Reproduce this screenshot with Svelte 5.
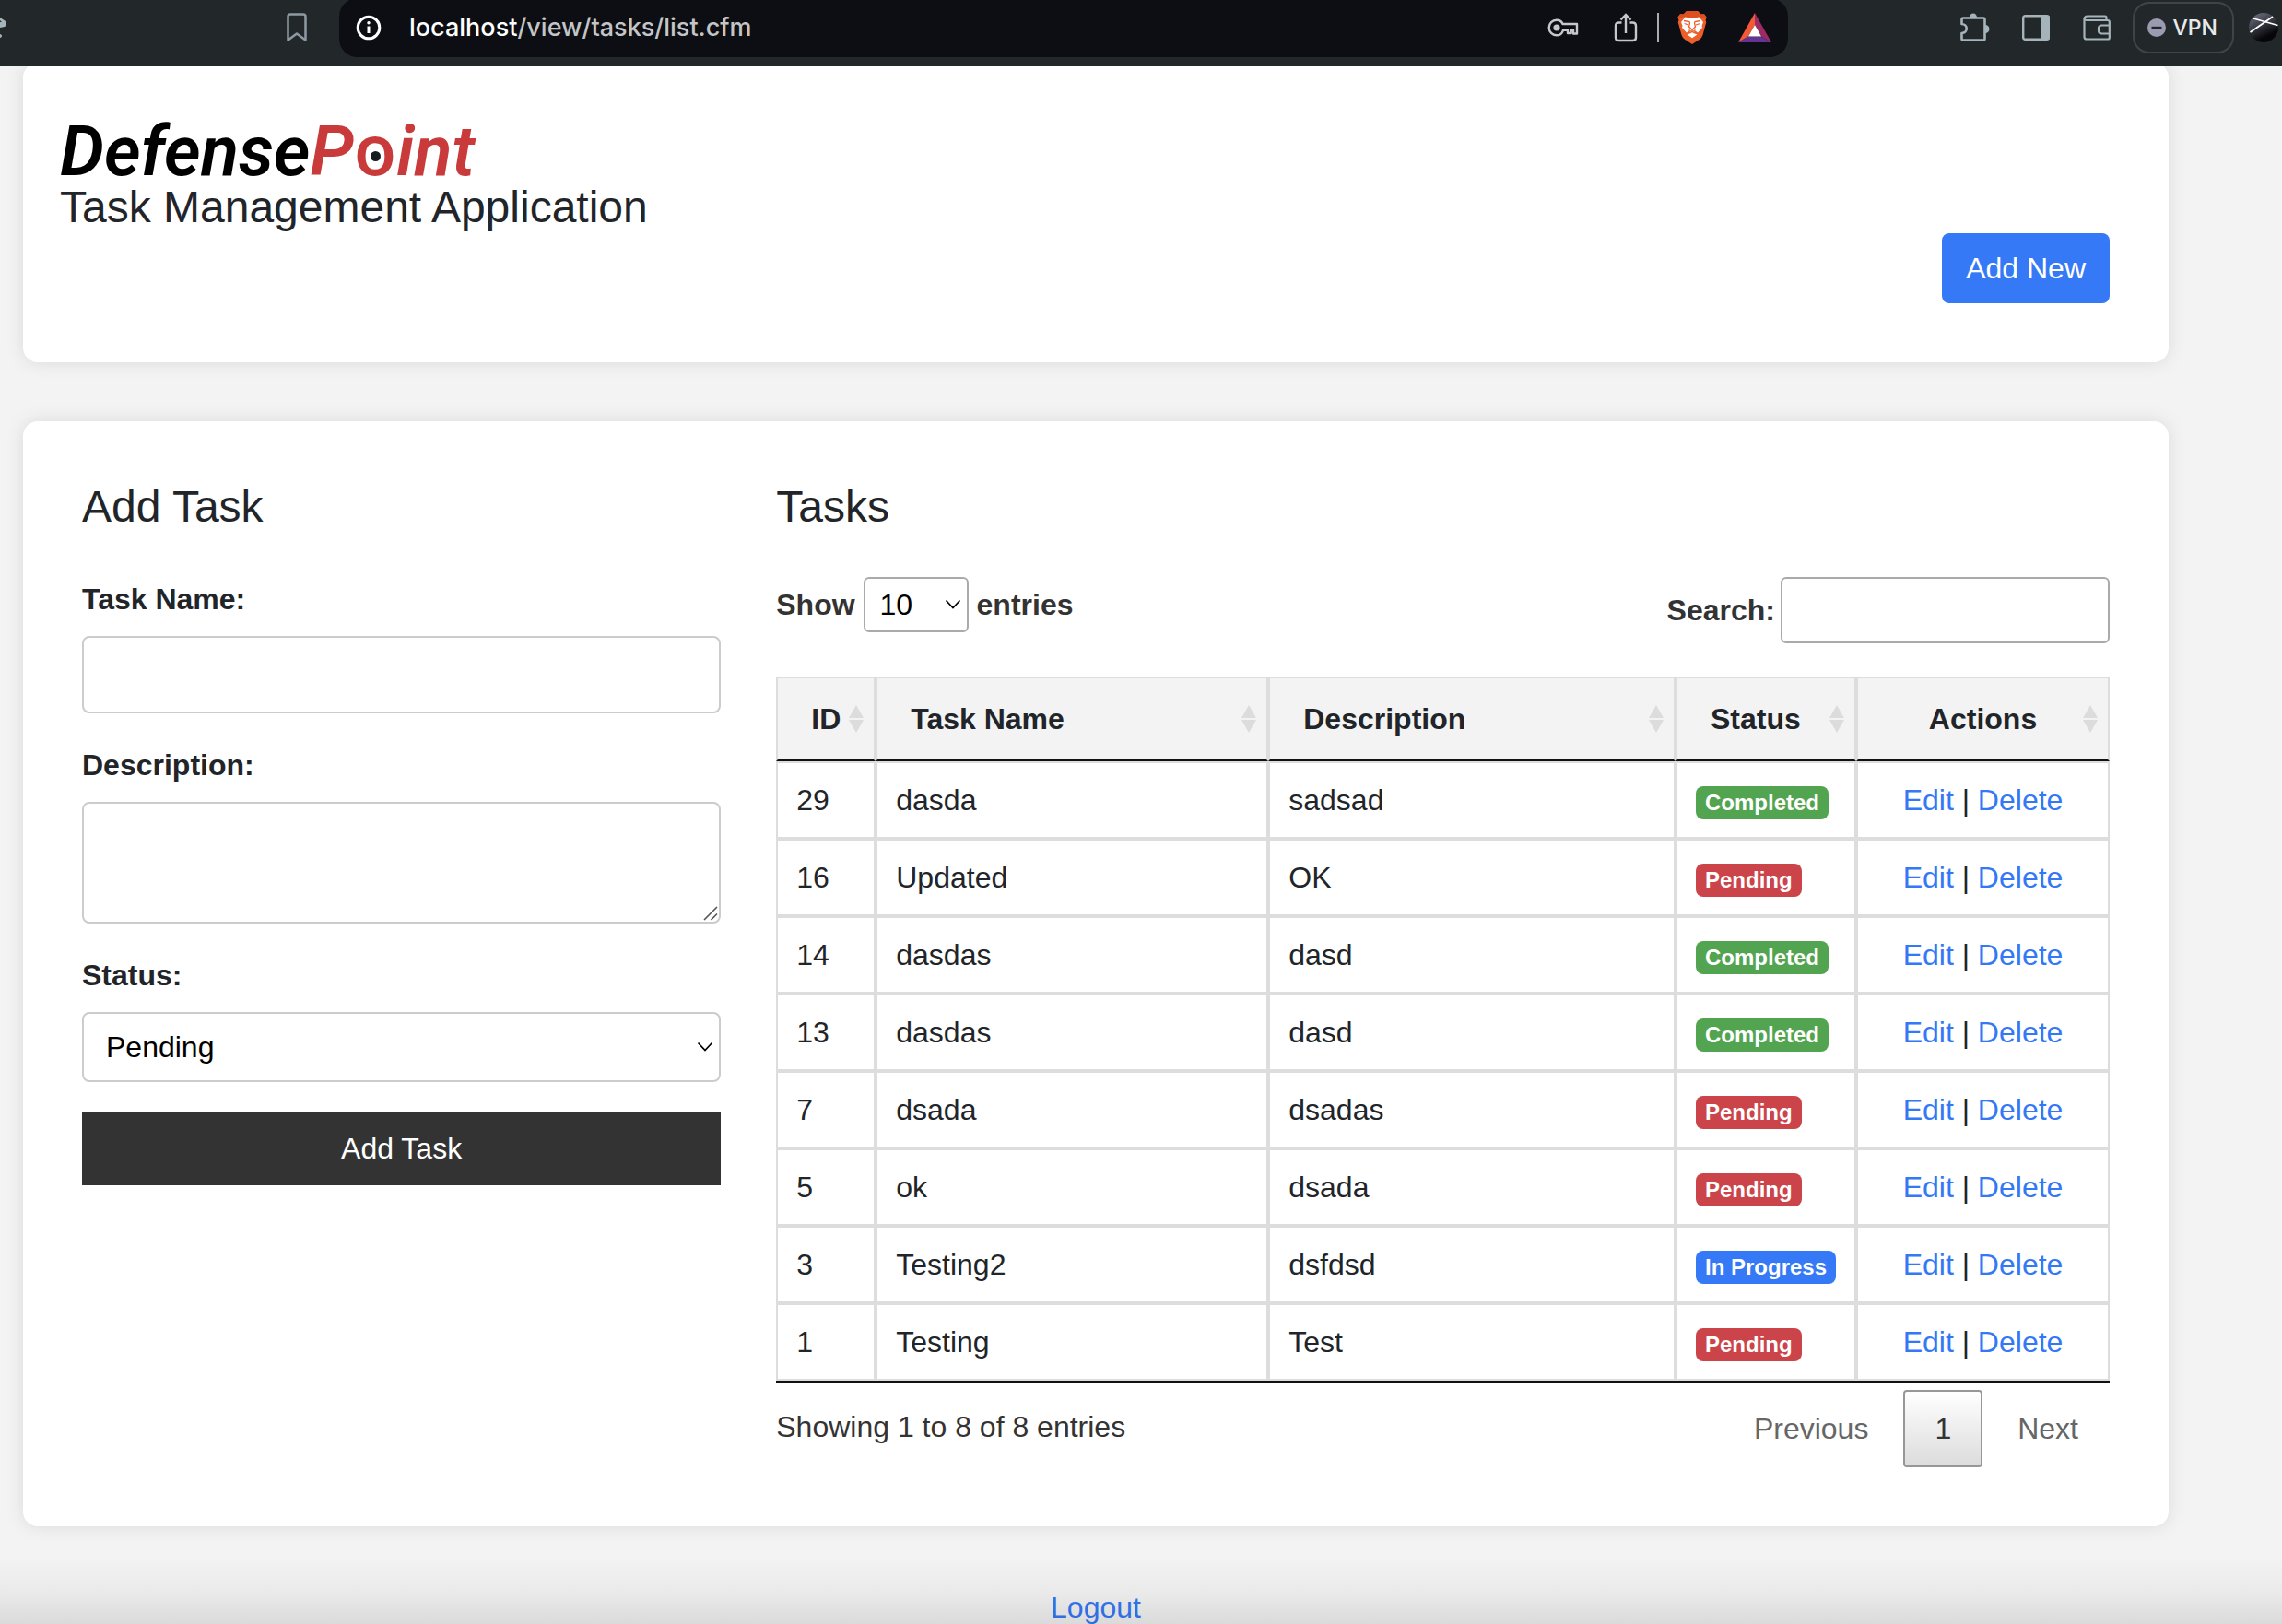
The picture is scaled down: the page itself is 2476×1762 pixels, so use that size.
<script>
  const tasks = [
    { id: 29, name: 'dasda', description: 'sadsad', status: 'Completed' },
    { id: 16, name: 'Updated', description: 'OK', status: 'Pending' },
    { id: 14, name: 'dasdas', description: 'dasd', status: 'Completed' },
    { id: 13, name: 'dasdas', description: 'dasd', status: 'Completed' },
    { id: 7, name: 'dsada', description: 'dsadas', status: 'Pending' },
    { id: 5, name: 'ok', description: 'dsada', status: 'Pending' },
    { id: 3, name: 'Testing2', description: 'dsfdsd', status: 'In Progress' },
    { id: 1, name: 'Testing', description: 'Test', status: 'Pending' }
  ];

  const columns = [
    { label: 'ID', key: 'id' },
    { label: 'Task Name', key: 'name' },
    { label: 'Description', key: 'description' },
    { label: 'Status', key: 'status' },
    { label: 'Actions', key: 'actions' }
  ];

  const badgeClass = {
    Completed: 'success',
    Pending: 'danger',
    'In Progress': 'primary'
  };

  let pageLength = $state('10');
  let newStatus = $state('Pending');
</script>

{#snippet chevron()}
  <svg class="chevron" width="18" height="12" viewBox="0 0 18 12" aria-hidden="true">
    <path d="M1.5 1.5 L9 9.5 L16.5 1.5" fill="none" stroke="#000" stroke-width="1.7" />
  </svg>
{/snippet}

<div class="window">
  <header class="toolbar">
    <div class="nav">
      <svg class="reload" width="8" height="32" viewBox="0 0 8 32" aria-hidden="true">
        <path d="M0 5 L6 9 Q8 13 5 15 L0 16 V10 L2 10 L0 8 Z M0 23 L2 24 Q2 27 0 27 Z" fill="#a5b3bb" />
      </svg>
      <button class="icon-button" aria-label="Bookmark">
        <svg width="24" height="32" viewBox="0 0 24 32">
          <path d="M2.5 4 Q2.5 1.5 5 1.5 H19 Q21.5 1.5 21.5 4 V29.5 L12 22.5 L2.5 29.5 Z" fill="none" stroke="#8d99a3" stroke-width="2.5" stroke-linejoin="round" />
        </svg>
      </button>
    </div>

    <div class="omnibox">
      <button class="info" aria-label="Site information">
        <svg width="28" height="28" viewBox="0 0 28 28">
          <circle cx="14" cy="14" r="11.8" fill="none" stroke="#fff" stroke-width="3" />
          <path d="M14 12.5 V20" stroke="#fff" stroke-width="3" />
          <circle cx="14" cy="8.7" r="1.7" fill="#fff" />
        </svg>
      </button>
      <span class="url"><b>localhost</b>/view/tasks/list.cfm</span>

      <button class="icon-button" aria-label="Saved passwords">
        <svg width="34" height="20" viewBox="0 0 34 20" fill="none" stroke="#c6c7c8" stroke-width="2.4">
          <path d="M16.5 6 H32 V16.5 H28 V12.5 H25.5 V16 H22 V12.8 H17 C15.8 16.5 13 18.3 10 18.3 C5.2 18.3 1.7 14.6 1.7 10 C1.7 5.4 5.2 1.7 10 1.7 C13 1.7 15.5 3.4 16.5 6 Z" stroke-linejoin="round" />
          <circle cx="10" cy="10" r="3.6" fill="#c6c7c8" stroke="none" />
        </svg>
      </button>
      <button class="icon-button" aria-label="Share">
        <svg width="26" height="32" viewBox="0 0 26 32" fill="none" stroke="#c6c7c8" stroke-width="2.4">
          <path d="M8.5 10.5 H5.5 Q2 10.5 2 14 V26.5 Q2 30 5.5 30 H20.5 Q24 30 24 26.5 V14 Q24 10.5 20.5 10.5 H17.5" />
          <path d="M13 22 V2.5 M7.5 7.5 L13 2 L18.5 7.5" />
        </svg>
      </button>
      <span class="divider"></span>
      <button class="icon-button" aria-label="Brave Shields">
        <svg width="32" height="36" viewBox="0 0 32 36">
          <path d="M10 0 H22 L25.5 3.5 L29 3.2 L31.5 6.5 L30.5 10 L31.3 12 L27.5 26 Q26.5 29 24 30.8 L16 36 L8 30.8 Q5.5 29 4.5 26 L0.7 12 L1.5 10 L0.5 6.5 L3 3.2 L6.5 3.5 Z" fill="#ec5f2a" />
          <path d="M10 0 H22 L25.5 3.5 L29 3.2 L31.5 6.5 L31 8 L25 6.5 L16 7.5 L7 6.5 L1 8 L0.5 6.5 L3 3.2 L6.5 3.5 Z" fill="#dd4f20" />
          <path d="M8.5 6.5 L13 7.5 L16 7 L19 7.5 L23.5 6.5 L28 12 L26.5 16 L27 18 L22 23.5 L19.5 21.5 L18 22.5 L16 24 L14 22.5 L12.5 21.5 L10 23.5 L5 18 L5.5 16 L4 12 Z M16 23.5 L21.5 25.5 L16 29.3 L10.5 25.5 Z" fill="#fff" />
          <path d="M7 10.5 L13 11.5 L13.5 13 L12.5 17 L16 20.5 L19.5 17 L18.5 13 L19 11.5 L25 10.5 M7.5 13.5 L12 15 M24.5 13.5 L20 15 M16 20 V23 M12.5 20.5 L16 23 L19.5 20.5" fill="none" stroke="#ec5f2a" stroke-width="1.3" />
        </svg>
      </button>
      <button class="icon-button" aria-label="Brave Rewards">
        <svg width="36" height="32" viewBox="0 0 36 32">
          <path d="M18 0 L0 32 L11 25.5 L18 13 Z" fill="#f15a35" />
          <path d="M18 0 L36 32 L25 25.5 L18 13 Z" fill="#9e2a63" />
          <path d="M0 32 H36 L25 25.5 H11 Z" fill="#653393" />
          <path d="M18 13 L25 25.5 H11 Z" fill="#fff" />
        </svg>
      </button>
    </div>

    <div class="extensions">
      <button class="icon-button" aria-label="Extensions">
        <svg width="34" height="34" viewBox="0 0 34 34">
          <path d="M4 6.5 H26 Q27.5 6.5 27.5 8 V29 Q27.5 30.5 26 30.5 H4 Q2.5 30.5 2.5 29 V23 C9.5 22.5 9.5 13.5 2.5 13 V8 Q2.5 6.5 4 6.5 Z" fill="none" stroke="#a5b3bb" stroke-width="2.6" stroke-linejoin="round" />
          <path d="M11 6 A4 4.5 0 0 1 19 6 Z M28 14 A4.5 4.5 0 0 1 28 23 Z" fill="#a5b3bb" />
        </svg>
      </button>
      <button class="icon-button" aria-label="Side panel">
        <svg width="30" height="28" viewBox="0 0 30 28">
          <rect x="1.2" y="1.2" width="27.6" height="25.6" rx="2" fill="none" stroke="#a5b3bb" stroke-width="2.4" />
          <rect x="21" y="1" width="8.5" height="26" fill="#a5b3bb" />
        </svg>
      </button>
      <button class="icon-button" aria-label="Wallet">
        <svg width="30" height="28" viewBox="0 0 30 28" fill="none" stroke="#a5b3bb" stroke-width="2.2">
          <path d="M1.5 5 Q1.5 1.5 5 1.5 H24 Q25.5 1.5 25.5 3 V6" />
          <path d="M1.5 4.5 Q2 6 4 6 H27 Q28.8 6 28.8 7.8 V24.7 Q28.8 26.5 27 26.5 H4 Q1.5 26.5 1.5 24 Z" />
          <path d="M28.5 11.5 H20.5 Q17 11.5 17 15 V17 Q17 20.5 20.5 20.5 H28.5" />
        </svg>
      </button>
      <button class="vpn">
        <svg width="20" height="20" viewBox="0 0 20 20" aria-hidden="true">
          <circle cx="10" cy="10" r="10" fill="#9a9bb0" />
          <path d="M4.5 10 H15.5" stroke="#22282a" stroke-width="2.4" />
        </svg>
        VPN
      </button>
      <button class="profile" aria-label="Profile">
        <svg width="32" height="32" viewBox="0 0 32 32">
          <defs>
            <linearGradient id="globe" x1="0.2" y1="0" x2="0.7" y2="1">
              <stop offset="0" stop-color="#6c6f80" />
              <stop offset="0.8" stop-color="#070709" />
            </linearGradient>
          </defs>
          <circle cx="16" cy="16" r="16" fill="url(#globe)" />
          <path d="M1.5 21 L26 4 M5 6 L31.5 13.5" stroke="#fff" stroke-width="1.8" />
        </svg>
      </button>
    </div>
  </header>

  <main class="page">
    <section class="card masthead">
      <div class="logo">Defense<span class="accent">P<span class="target">o</span>int</span></div>
      <h1>Task Management Application</h1>
      <div class="card-actions"><a class="add-new" href="#add">Add New</a></div>
    </section>

    <section class="card content">
      <form id="add" class="task-form" onsubmit={(e) => e.preventDefault()}>
        <h2>Add Task</h2>
        <div class="field">
          <label for="task-name">Task Name:</label>
          <input id="task-name" type="text" />
        </div>
        <div class="field">
          <label for="task-description">Description:</label>
          <div class="control">
            <textarea id="task-description"></textarea>
            <svg class="grip" width="16" height="16" viewBox="0 0 16 16" aria-hidden="true">
              <path d="M1 15 L15 1 M8.5 15 L15 8.5" stroke="#555" stroke-width="1.6" />
            </svg>
          </div>
        </div>
        <div class="field">
          <label for="task-status">Status:</label>
          <div class="control">
            <select id="task-status" bind:value={newStatus}>
              <option>Pending</option>
              <option>In Progress</option>
              <option>Completed</option>
            </select>
            {@render chevron()}
          </div>
        </div>
        <button class="submit" type="submit">Add Task</button>
      </form>

      <div class="task-list">
        <h2>Tasks</h2>
        <div class="filters">
          <label class="length">
            Show
            <span class="control">
              <select bind:value={pageLength}>
                <option>10</option>
                <option>25</option>
                <option>50</option>
                <option>100</option>
              </select>
              {@render chevron()}
            </span>
            entries
          </label>
          <label class="search">Search: <input type="search" /></label>
        </div>

        <table>
          <colgroup>
            <col class="col-id" />
            <col class="col-name" />
            <col />
            <col class="col-status" />
            <col class="col-actions" />
          </colgroup>
          <thead>
            <tr>
              {#each columns as column (column.key)}
                <th scope="col" class={column.key}>
                  {column.label}
                  <svg class="sort" width="18" height="32" viewBox="0 0 18 32" aria-hidden="true">
                    <path d="M9 1 L17 15 H1 Z M9 31 L17 17 H1 Z" fill="#dcdcdc" />
                  </svg>
                </th>
              {/each}
            </tr>
          </thead>
          <tbody>
            {#each tasks as task (task.id)}
              <tr>
                <td>{task.id}</td>
                <td>{task.name}</td>
                <td>{task.description}</td>
                <td><span class="badge {badgeClass[task.status]}">{task.status}</span></td>
                <td class="actions"><a href="#edit-{task.id}">Edit</a> | <a href="#delete-{task.id}">Delete</a></td>
              </tr>
            {/each}
          </tbody>
        </table>

        <div class="table-footer">
          <p>Showing 1 to 8 of 8 entries</p>
          <nav class="pagination" aria-label="Table pages">
            <button disabled>Previous</button>
            <button class="current" aria-current="page">1</button>
            <button disabled>Next</button>
          </nav>
        </div>
      </div>
    </section>

    <footer><a href="#logout">Logout</a></footer>
  </main>
  <div class="fade"></div>
</div>

<style>
  :global(body) {
    background: #f3f3f3;
  }

  .window,
  .window * {
    box-sizing: border-box;
  }

  .window {
    position: relative;
    display: flex;
    flex-direction: column;
    height: 100vh;
    overflow: hidden;
    font: 32px/48px 'Liberation Sans', Arial, sans-serif;
    color: #212529;
  }

  button,
  input,
  select,
  textarea {
    margin: 0;
    font: inherit;
    color: inherit;
  }

  svg {
    display: block;
  }

  a {
    color: #3478f6;
    text-decoration: none;
  }

  /* Browser toolbar */
  .toolbar {
    position: relative;
    z-index: 1;
    display: flex;
    align-items: flex-start;
    flex: none;
    height: 72px;
    overflow: hidden;
    background: #22282a;
  }

  .toolbar button {
    display: flex;
    align-items: center;
    justify-content: center;
    padding: 0;
    border: 0;
    background: none;
  }

  .nav {
    display: flex;
    align-items: center;
    justify-content: space-between;
    width: 368px;
    height: 60px;
    padding-right: 12px;
  }

  .toolbar .icon-button {
    flex: none;
    width: 68px;
    height: 60px;
  }

  .omnibox {
    display: flex;
    flex: 1;
    align-items: center;
    height: 64px;
    margin-top: -2px;
    padding: 0 2px 0 18px;
    border-radius: 20px;
    background: #0d0e13;
  }

  .url {
    flex: 1;
    padding-left: 30px;
    font-family: Inter, Roboto, sans-serif;
    font-size: 27px;
    font-weight: 500;
    color: #c4c5c6;
  }

  .url b {
    font-weight: 500;
    color: #fff;
  }

  .divider {
    width: 2px;
    height: 32px;
    margin-right: 2px;
    background: #a9abad;
  }

  .extensions {
    display: flex;
    align-items: center;
    height: 60px;
    padding: 0 4px 0 170px;
  }

  .toolbar .extensions .icon-button {
    width: 66px;
  }

  .toolbar .vpn {
    gap: 8px;
    height: 56px;
    margin: 0 16px 0 6px;
    padding: 0 16px 0 14px;
    border: 2px solid #3d4549;
    border-radius: 18px;
    font-family: Inter, Roboto, sans-serif;
    font-size: 23px;
    font-weight: 500;
    color: #e9eaec;
  }

  /* Page */
  .page {
    padding: 0 123px 0 25px;
  }

  .card {
    border-radius: 16px;
    background: #fff;
    box-shadow: 0 0 20px rgba(0, 0, 0, 0.1);
  }

  .masthead {
    margin: -4px 0 64px;
    padding: 64px 64px 64px 40px;
  }

  .logo {
    font: italic 600 76px/64px Roboto, 'Open Sans', sans-serif;
    color: #000;
  }

  .accent {
    color: #c93a3a;
  }

  .target {
    position: relative;
    font: normal 600 76px/1px 'Open Sans', sans-serif;
  }

  /* Bullseye in the middle of the letter */
  .target::after {
    content: '';
    position: absolute;
    left: 50%;
    bottom: 37px;
    width: 11px;
    height: 11px;
    margin-left: -5px;
    border-radius: 50%;
    background: #151c1f;
  }

  h1,
  h2 {
    margin: 0;
    font-size: 48px;
    font-weight: 400;
    line-height: 57px;
  }

  h2 {
    margin-bottom: 48px;
  }

  .card-actions {
    display: flex;
    justify-content: flex-end;
  }

  .add-new {
    padding: 14px 26px;
    border-radius: 8px;
    background: #3579f6;
    color: #fff;
  }

  .content {
    display: grid;
    grid-template-columns: 23fr 48fr;
    gap: 60px;
    padding: 64px;
  }

  .task-form {
    display: flex;
    flex-direction: column;
  }

  .field {
    display: flex;
    flex-direction: column;
    gap: 16px;
    margin-bottom: 32px;
  }

  label {
    font-weight: 700;
  }

  .control {
    position: relative;
    display: block;
  }

  .field input,
  .field textarea,
  .field select {
    display: block;
    width: 100%;
    height: 84px;
    padding: 0 24px;
    border: 2px solid #ccc;
    border-radius: 8px;
    background: #fff;
    color: #000;
    outline: 0;
  }

  .field textarea {
    height: 132px;
    resize: none;
  }

  .field select,
  .length select {
    appearance: none;
    font-weight: 400;
    color: #000;
  }

  .field select {
    height: 76px;
  }

  .chevron {
    position: absolute;
    top: 50%;
    right: 8px;
    margin-top: -6px;
    pointer-events: none;
  }

  .grip {
    position: absolute;
    right: 3px;
    bottom: 3px;
    pointer-events: none;
  }

  .submit {
    height: 80px;
    border: 0;
    background: #333;
    color: #fff;
  }

  .filters {
    display: flex;
    align-items: flex-start;
    justify-content: space-between;
    margin-bottom: 36px;
    color: #333;
  }

  .length,
  .search {
    display: flex;
    align-items: center;
    gap: 9px;
  }

  .search {
    gap: 6px;
  }

  .length select {
    display: block;
    width: 114px;
    height: 60px;
    padding: 0 16px;
    border: 2px solid #aaa;
    border-radius: 6px;
    background: #fff;
  }

  .search input {
    width: 357px;
    height: 72px;
    padding: 0 10px;
    border: 2px solid #aaa;
    border-radius: 6px;
    background: #fff;
    outline: 0;
  }

  table {
    width: 100%;
    table-layout: fixed;
    border-collapse: separate;
    border-spacing: 0;
    border-bottom: 2px solid #111;
  }

  .col-id {
    width: 108px;
  }

  .col-name {
    width: 426px;
  }

  .col-status {
    width: 196px;
  }

  .col-actions {
    width: 275px;
  }

  th,
  td {
    border: 2px solid #ddd;
    text-align: left;
  }

  th {
    position: relative;
    padding: 20px 36px;
    border-bottom-color: #111;
    background: #f3f3f3;
    white-space: nowrap;
  }

  td {
    padding: 16px 20px;
  }

  .actions {
    text-align: center;
  }

  .sort {
    position: absolute;
    top: 50%;
    right: 10px;
    margin-top: -16px;
  }

  .badge {
    display: inline-block;
    padding: 6px 10px;
    border-radius: 8px;
    font-size: 24px;
    font-weight: 700;
    line-height: 24px;
    white-space: nowrap;
    color: #fff;
  }

  .success {
    background: #53a451;
  }

  .danger {
    background: #cb444a;
  }

  .primary {
    background: #3579f6;
  }

  .table-footer {
    display: flex;
    align-items: flex-start;
    justify-content: space-between;
    padding-top: 8px;
    color: #333;
  }

  .table-footer p {
    margin: 16px 0 0;
  }

  .pagination {
    display: flex;
    gap: 4px;
  }

  .pagination button {
    padding: 16px 32px;
    border: 2px solid transparent;
    border-radius: 4px;
    background: none;
    color: #666;
  }

  .pagination .current {
    border-color: #979797;
    background: linear-gradient(#fff, #dcdcdc);
    color: #333;
  }

  footer {
    padding-top: 64px;
    text-align: center;
  }

  /* Shade along the lower edge of the window */
  .fade {
    position: absolute;
    right: 0;
    bottom: 0;
    left: 0;
    height: 72px;
    background: linear-gradient(rgba(0, 0, 0, 0), rgba(0, 0, 0, 0.04) 55%, rgba(0, 0, 0, 0.1));
    pointer-events: none;
  }
</style>
